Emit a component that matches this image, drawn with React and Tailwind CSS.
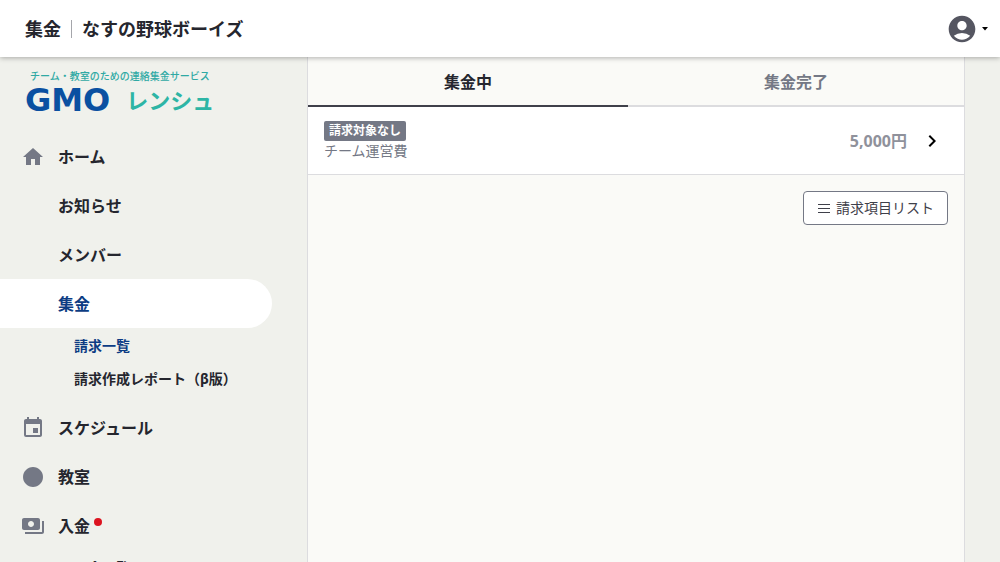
import React from 'react';
import {
  MdAccountCircle,
  MdChevronRight,
  MdCircle,
  MdEvent,
  MdHome,
  MdPayments,
} from 'react-icons/md';

const navItems = [
  { label: 'ホーム', icon: MdHome },
  { label: 'お知らせ' },
  { label: 'メンバー' },
  {
    label: '集金',
    active: true,
    children: [
      { label: '請求一覧', active: true },
      { label: '請求作成レポート（β版）' },
    ],
  },
  { label: 'スケジュール', icon: MdEvent },
  { label: '教室', icon: MdCircle },
  {
    label: '入金',
    icon: MdPayments,
    badge: true,
    children: [{ label: '入金一覧' }],
  },
];

function Header() {
  return (
    <header className="relative z-10 flex h-[57px] shrink-0 items-center justify-between bg-white pr-3 pl-[25px] shadow-[0_1px_5px_rgba(0,0,0,0.3)]">
      <h1 className="flex items-center text-lg font-bold text-[#25262e]">
        集金
        <span className="mx-2.5 h-[18px] w-px bg-[#a5a6ab]" />
        なすの野球ボーイズ
      </h1>
      <button
        type="button"
        aria-label="アカウント"
        className="flex items-center gap-1"
      >
        <MdAccountCircle className="size-8 text-[#555661]" />
        <svg viewBox="0 0 6 4" className="h-1 w-1.5 fill-black">
          <path d="M0 0h6L3 3.5z" />
        </svg>
      </button>
    </header>
  );
}

function Logo() {
  return (
    <a href="#" className="block pt-[11px] pl-[25px]">
      <span className="block pl-[5px] text-[10px] leading-4 font-medium text-[#2fa9a4]">
        チーム・教室のための連絡集金サービス
      </span>
      <span className="flex h-8 items-center gap-4">
        <span className="font-['DejaVu_Sans'] text-[32px] leading-8 font-bold text-[#0a50a1]">
          GMO
        </span>
        <span className="text-[22px] leading-8 font-bold text-[#2db5a5]">
          レンシュ
        </span>
      </span>
    </a>
  );
}

function NavItem({ item }) {
  const Icon = item.icon;

  return (
    <li>
      <a
        href="#"
        className={`mr-[35px] flex h-[49px] items-center gap-[13px] rounded-r-full pl-[21px] font-bold ${
          item.active ? 'bg-white text-[#0c3c83]' : 'text-[#25262e]'
        }`}
      >
        <span className="size-6 text-[#747885]">
          {Icon && <Icon className="size-6" />}
        </span>
        <span className="flex items-start gap-1">
          {item.label}
          {item.badge && (
            <span className="mt-1 size-2 rounded-full bg-[#dc1420]" />
          )}
        </span>
      </a>
      {item.children && (
        <ul className="pt-px pb-2">
          {item.children.map((child) => (
            <li key={child.label}>
              <a
                href="#"
                className={`flex h-[33px] items-center pl-[74px] text-sm font-bold ${
                  child.active ? 'text-[#0c3c83]' : 'text-[#25262e]'
                }`}
              >
                {child.label}
              </a>
            </li>
          ))}
        </ul>
      )}
    </li>
  );
}

function Tabs() {
  return (
    <div role="tablist" className="flex h-[50px] font-bold">
      <button
        type="button"
        role="tab"
        aria-selected="true"
        className="flex-auto border-b-2 border-[#3f404a] pt-0.5 text-[#25262e]"
      >
        集金中
      </button>
      <button
        type="button"
        role="tab"
        aria-selected="false"
        className="flex-auto border-b-2 border-[#dcdcdf] pt-0.5 text-[#747885]"
      >
        集金完了
      </button>
    </div>
  );
}

export default function App() {
  return (
    <div className="flex h-screen flex-col overflow-hidden bg-[#f0f1ec] font-['Noto_Sans','Noto_Sans_CJK_JP',sans-serif]">
      <Header />
      <div className="flex min-h-0 flex-1">
        <aside className="w-[307px] shrink-0 overflow-hidden">
          <Logo />
          <nav className="pt-4">
            <ul>
              {navItems.map((item) => (
                <NavItem key={item.label} item={item} />
              ))}
            </ul>
          </nav>
        </aside>
        <main className="mr-[35px] min-w-0 flex-1 border-x border-[#dcdcdf] bg-[#fafaf7]">
          <Tabs />
          <a
            href="#"
            className="flex h-[68px] items-center justify-between border-b border-[#dcdcdf] bg-white pr-5 pl-4"
          >
            <span className="flex flex-col items-start">
              <span className="rounded-xs bg-[#747885] px-[5px] text-xs leading-5 font-bold text-white">
                請求対象なし
              </span>
              <span className="text-sm text-[#747885]">チーム運営費</span>
            </span>
            <span className="flex items-center gap-[13px]">
              <span className="font-bold text-[#8f919b]">5,000円</span>
              <MdChevronRight className="size-6 text-black" />
            </span>
          </a>
          <div className="flex justify-end p-4">
            <button
              type="button"
              className="flex h-[34px] items-center gap-[5px] rounded border border-[#747885] bg-white px-[13px] text-sm text-[#3f404a]"
            >
              <svg
                viewBox="0 0 14 14"
                className="size-3.5 fill-none stroke-current"
              >
                <path d="M1 3.5h12M1 7.5h12M1 11.5h12" />
              </svg>
              請求項目リスト
            </button>
          </div>
        </main>
      </div>
    </div>
  );
}
